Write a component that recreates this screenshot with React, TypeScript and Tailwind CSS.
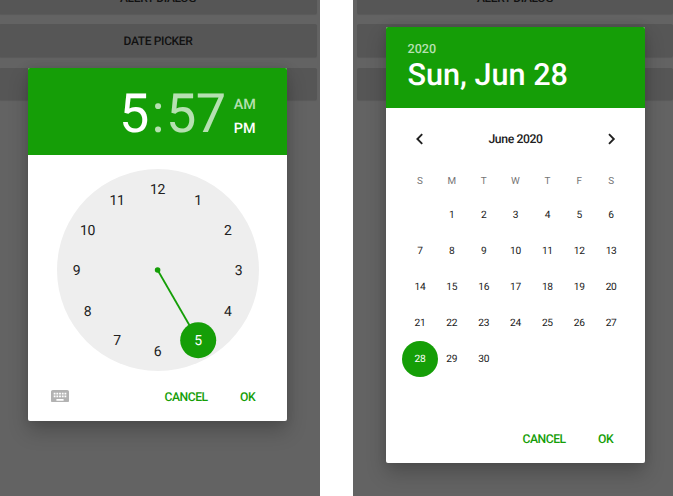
import type { ReactNode } from "react";

const weekdays = ["S", "M", "T", "W", "T", "F", "S"];
const days = Array.from({ length: 30 }, (_, i) => i + 1);
const hours = Array.from({ length: 12 }, (_, i) => i + 1);

function Backdrop({ side }: { side: "left" | "right" }) {
  const pad = side === "left" ? "-ml-px pr-[3px]" : "pl-[4px]";
  const item =
    "flex shrink-0 items-center justify-center rounded-[2px] bg-[#565656] text-[12px] font-medium leading-none tracking-[-0.35px] text-[#111] shadow-[0_1px_1px_rgba(0,0,0,0.1)]";
  return (
    <div className={`flex h-full flex-col gap-[10px] ${pad}`}>
      <div className={`${item} -mt-5 h-[34px] pt-px`}>ALERT DIALOG</div>
      <div className={`${item} h-[33px]`}>{side === "left" ? "DATE PICKER" : ""}</div>
      <div className={`${item} mt-px h-8`} />
    </div>
  );
}

function Screen({ side, children }: { side: "left" | "right"; children: ReactNode }) {
  return (
    <section className="relative h-full w-[320px] overflow-hidden bg-[#636363]">
      <Backdrop side={side} />
      {children}
    </section>
  );
}

function Clock() {
  return (
    <svg width="202" height="202" viewBox="-101 -101 202 202" className="ml-[29px] mt-[14px] block overflow-visible">
      <circle r="101" fill="#eee" />
      <path d="M0 0L40.500 70.200" stroke="#159e07" strokeWidth="1.8" transform="translate(-.4 0)" />
      <circle cx="-.4" r="2.8" fill="#159e07" />
      <circle cx="40.200" cy="70.200" r="18" fill="#159e07" />
      {hours.map((h) => {
        const a = (h * Math.PI) / 6;
        return (
          <text
            key={h}
            x={Math.sin(a) * 81 - 0.4}
            y={-Math.cos(a) * 81 + 5}
            textAnchor="middle"
            fontSize="14"
            letterSpacing="-0.3"
            fill={h === 5 ? "#fff" : "#212121"}
          >
            {h}
          </text>
        );
      })}
    </svg>
  );
}

function KeyboardIcon() {
  return (
    <svg width="18" height="12.6" viewBox="2 5 20 14" fill="#b2b2b2">
      <path d="M20 5H4c-1.100 0-1.990.9-1.990 2L2 17c0 1.100.9 2 2 2h16c1.100 0 2-.9 2-2V7c0-1.100-.9-2-2-2zm-9 3h2v2h-2V8zm0 3h2v2h-2v-2zM8 8h2v2H8V8zm0 3h2v2H8v-2zm-1 2H5v-2h2v2zm0-3H5V8h2v2zm9 7H8v-2h8v2zm0-4h-2v-2h2v2zm0-3h-2V8h2v2zm3 3h-2v-2h2v2zm0-3h-2V8h2v2z" />
    </svg>
  );
}

function Actions() {
  return (
    <div className="flex pt-[3px] text-[12.2px] font-medium tracking-[-0.5px] text-[#159e07]">
      <span className="w-[75.500px]">CANCEL</span>
      <span>OK</span>
    </div>
  );
}

function TimePicker() {
  return (
    <div className="absolute left-[28px] top-[68px] flex h-[353px] w-[259px] flex-col overflow-hidden rounded-[2px] bg-white">
      <header className="flex h-[87px] shrink-0 bg-[#159e07] pl-[91px] text-white">
        <div className="mt-[15px] flex text-[54px] leading-[64px]">
          <span className="w-[31px]">5</span>
          <span className="w-[16px] text-center text-[#b6e0b1]">:</span>
          <span className="tracking-[-0.5px] text-[#b6e0b1]">57</span>
        </div>
        <div className="ml-[8px] mt-[25px] flex flex-col text-[14.400px] font-medium leading-6">
          <span className="text-[#b6e0b1]">AM</span>
          <span>PM</span>
        </div>
      </header>
      <Clock />
      <footer className="mt-[15px] flex h-5 items-center gap-[95.500px] pl-[23px]">
        <KeyboardIcon />
        <Actions />
      </footer>
    </div>
  );
}

function DatePicker() {
  return (
    <div className="absolute left-[33px] top-[27px] flex h-[436px] w-[259px] flex-col overflow-hidden rounded-[2px] bg-white">
      <header className="flex h-[81px] shrink-0 flex-col bg-[#159e07] pl-[21.500px] pt-[15px] font-medium text-white">
        <span className="text-[12.600px] leading-[15px] text-[#b6e0b1]">2020</span>
        <span className="mt-px text-[30.600px] leading-[36px]">Sun, Jun 28</span>
      </header>
      <div className="mt-[21px] flex h-5 items-center justify-between px-[29px] text-[12.200px] font-medium tracking-[-0.4px] text-[#212121]">
        <svg width="9" height="12" viewBox="0 0 9 12" fill="none" stroke="#212121" strokeWidth="1.9">
          <path d="M7.200 1.200L2.400 6l4.800 4.800" />
        </svg>
        <span>June 2020</span>
        <svg width="9" height="12" viewBox="0 0 9 12" fill="none" stroke="#212121" strokeWidth="1.9">
          <path d="M2 1.200L6.800 6l-4.800 4.800" />
        </svg>
      </div>
      <div className="mt-[23px] grid grid-cols-7 px-[18px] text-center text-[9.900px] leading-5 text-[#757575]">
        {weekdays.map((d, i) => (
          <span key={i}>{d}</span>
        ))}
      </div>
      <div className="mt-[5px] grid grid-cols-7 px-[18px] text-[10.200px] tracking-[-0.3px] text-[#212121]">
        <span />
        {days.map((d) => (
          <div key={d} className="flex h-9 items-center justify-center">
            <span
              className={
                d === 28
                  ? "flex size-9 shrink-0 items-center justify-center rounded-full bg-[#159e07] pt-[2px] text-white"
                  : "pt-[2px]"
              }
            >
              {d}
            </span>
          </div>
        ))}
      </div>
      <footer className="mb-[15px] mt-auto flex h-5 items-center pl-[136.500px]">
        <Actions />
      </footer>
    </div>
  );
}

function DialogShadow({ className }: { className: string }) {
  return (
    <div
      className={`absolute w-[259px] rounded-[2px] shadow-[0_10px_20px_rgba(0,0,0,0.22),0_0_10px_rgba(0,0,0,0.1)] ${className}`}
    />
  );
}

export default function App() {
  return (
    <main className="flex h-[496px] w-[673px] justify-between overflow-hidden bg-white font-[Roboto,sans-serif] [text-rendering:geometricPrecision]">
      <Screen side="left">
        <DialogShadow className="left-[28px] top-[68px] h-[353px]" />
        <TimePicker />
      </Screen>
      <Screen side="right">
        <DialogShadow className="left-[33px] top-[27px] h-[436px]" />
        <DatePicker />
      </Screen>
    </main>
  );
}
